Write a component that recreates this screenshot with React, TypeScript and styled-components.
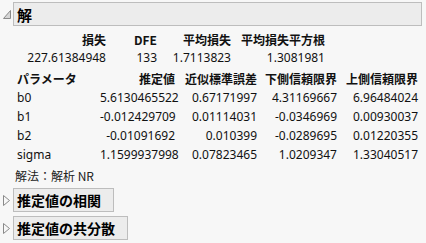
import styled, { createGlobalStyle } from "styled-components";

const GlobalStyle = createGlobalStyle`
  html, body {
    margin: 0;
    padding: 0;
    background: #f7f7f7;
  }
  body {
    font-family: "Noto Sans", "Noto Sans CJK JP", sans-serif;
    color: #111;
  }
`;

const Page = styled.div`
  width: 426px;
  height: 243px;
  padding-top: 2px;
  box-sizing: border-box;
  overflow: hidden;
`;

const OutlineRow = styled.div<{ gap?: number }>`
  display: flex;
  align-items: center;
  margin-top: ${(p) => p.gap ?? 0}px;
`;

const Toggle = styled.svg`
  width: 13px;
  flex: 0 0 13px;
`;

const TitleBox = styled.div<{ full?: boolean }>`
  box-sizing: border-box;
  height: ${(p) => (p.full ? 24 : 24)}px;
  ${(p) => (p.full ? "width: 409px;" : "")}
  padding: 0 12px 0 3px;
  display: flex;
  align-items: center;
  background: #ececec;
  border: 1px solid #bdbdbd;
  font-family: "Noto Sans CJK JP", sans-serif;
  font-weight: 700;
  font-size: ${(p) => (p.full ? 15 : 14)}px;
  color: #000;
`;

const Body = styled.div`
  font-size: 12px;
`;

const SummaryGrid = styled.div`
  display: grid;
  grid-template-columns: 86px 51px 74px 94px;
  margin: 4px 0 0 20px;
  grid-auto-rows: 18px;
  align-items: center;
  text-align: right;
  white-space: nowrap;
`;

const ParamGrid = styled.div`
  display: grid;
  grid-template-columns: 83px 75px 82px 80px 81px;
  margin: 3px 0 0 17px;
  grid-auto-rows: 19px;
  align-items: center;
  text-align: right;
  white-space: nowrap;
`;

const Head = styled.div<{ left?: boolean }>`
  font-family: "Noto Sans CJK JP", sans-serif;
  font-weight: 700;
  ${(p) => (p.left ? "text-align: left;" : "")}
`;

const Cell = styled.div<{ left?: boolean }>`
  ${(p) => (p.left ? "text-align: left;" : "")}
`;

const Note = styled.div`
  margin: 3px 0 0 15px;
  height: 18px;
  line-height: 18px;
  font-family: "Noto Sans CJK JP", sans-serif;
  font-size: 12px;
  color: #222;
`;

function OpenIcon() {
  return (
    <Toggle height="10" viewBox="0 0 13 10">
      <polygon points="3.5,9.5 10.5,9.5 10.5,1.5" fill="#d6d6d6" stroke="#8a8a8a" strokeWidth="1" />
    </Toggle>
  );
}

function ClosedIcon() {
  return (
    <Toggle height="13" viewBox="0 0 13 13">
      <polygon points="3.5,1.5 9.5,6.5 3.5,11.5" fill="#f7f7f7" stroke="#8a8a8a" strokeWidth="1" />
    </Toggle>
  );
}

const params = [
  ["b0", "5.6130465522", "0.67171997", "4.31169667", "6.96484024"],
  ["b1", "-0.012429709", "0.01114031", "-0.0346969", "0.00930037"],
  ["b2", "-0.01091692", "0.010399", "-0.0289695", "0.01220355"],
  ["sigma", "1.1599937998", "0.07823465", "1.0209347", "1.33040517"],
];

export default function App() {
  return (
    <Page>
      <GlobalStyle />
      <OutlineRow>
        <OpenIcon />
        <TitleBox full>解</TitleBox>
      </OutlineRow>
      <Body>
        <SummaryGrid>
          <Head>損失</Head>
          <Head>DFE</Head>
          <Head>平均損失</Head>
          <Head>平均損失平方根</Head>
          <Cell>227.61384948</Cell>
          <Cell>133</Cell>
          <Cell>1.7113823</Cell>
          <Cell>1.3081981</Cell>
        </SummaryGrid>
        <ParamGrid>
          <Head left>パラメータ</Head>
          <Head>推定値</Head>
          <Head>近似標準誤差</Head>
          <Head>下側信頼限界</Head>
          <Head>上側信頼限界</Head>
          {params.map((row) =>
            row.map((v, i) => (
              <Cell key={row[0] + i} left={i === 0}>
                {v}
              </Cell>
            ))
          )}
        </ParamGrid>
        <Note>解法：解析 NR</Note>
      </Body>
      <OutlineRow gap={3}>
        <ClosedIcon />
        <TitleBox>推定値の相関</TitleBox>
      </OutlineRow>
      <OutlineRow gap={4}>
        <ClosedIcon />
        <TitleBox>推定値の共分散</TitleBox>
      </OutlineRow>
    </Page>
  );
}
